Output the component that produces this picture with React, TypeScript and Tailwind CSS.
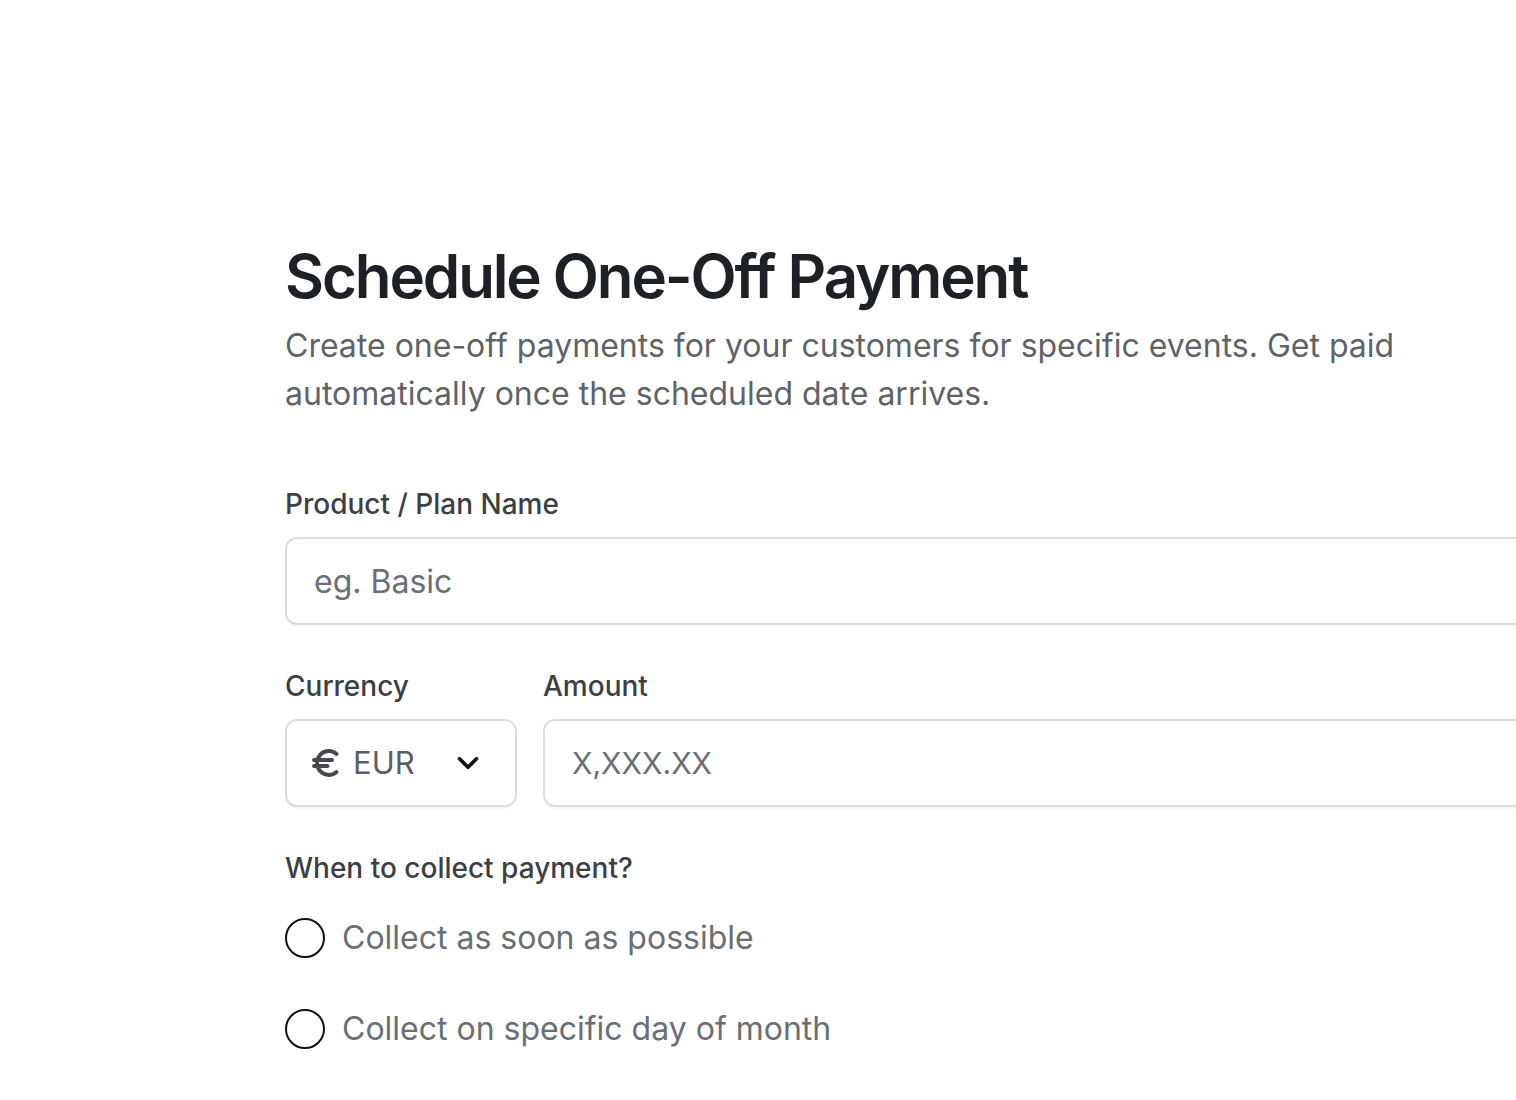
import React, { useState } from 'react';
import { Euro, ChevronDown } from 'lucide-react';

const App: React.FC = () => {
  const [name, setName] = useState('');
  const [amount, setAmount] = useState('');
  const [when, setWhen] = useState<'asap' | 'day' | null>(null);

  return (
    <div className="min-h-screen bg-white font-['Inter',sans-serif] overflow-hidden">
      <div className="pl-[285px] pt-[240px] w-[1600px]">
        <h1 className="text-[60px] leading-[72px] font-semibold tracking-[-0.035em] text-[#1d2025]">
          Schedule One-Off Payment
        </h1>
        <p className="mt-[10px] max-w-[1140px] text-[32px] leading-[48px] text-[#5f6368]">
          Create one-off payments for your customers for specific events. Get paid automatically once the scheduled date arrives.
        </p>

        <div className="mt-[66px]">
          <label className="block text-[28px] leading-[40px] font-medium text-[#3c3f44]">Product / Plan Name</label>
          <input
            value={name}
            onChange={(e) => setName(e.target.value)}
            placeholder="eg. Basic"
            className="mt-[13px] w-full h-[88px] px-[27px] rounded-[12px] border-2 border-[#dcdddf] shadow-[0_2px_2px_rgba(0,0,0,0.04)] bg-white text-[32px] text-[#3c3f44] placeholder:text-[#6b6e73] focus:outline-none"
          />
        </div>

        <div className="mt-[41px] flex gap-[26px]">
          <div className="w-[232px] shrink-0">
            <label className="block text-[28px] leading-[40px] font-medium text-[#3c3f44]">Currency</label>
            <button className="mt-[13px] w-full h-[88px] pl-[21px] pr-[30px] rounded-[12px] border-2 border-[#dcdddf] shadow-[0_2px_2px_rgba(0,0,0,0.04)] bg-white flex items-center">
              <Euro size={36} strokeWidth={2.6} color="#45484d" />
              <span className="ml-[9px] text-[31px] text-[#5b5e63]">EUR</span>
              <ChevronDown className="ml-auto" size={34} strokeWidth={2.6} color="#111" />
            </button>
          </div>
          <div className="flex-1">
            <label className="block text-[28px] leading-[40px] font-medium text-[#3c3f44]">Amount</label>
            <input
              value={amount}
              onChange={(e) => setAmount(e.target.value)}
              placeholder="X,XXX.XX"
              className="mt-[13px] w-full h-[88px] px-[27px] rounded-[12px] border-2 border-[#dcdddf] shadow-[0_2px_2px_rgba(0,0,0,0.04)] bg-white text-[30px] text-[#3c3f44] placeholder:text-[#6b6e73] focus:outline-none"
            />
          </div>
        </div>

        <p className="mt-[41px] text-[28px] leading-[40px] font-medium text-[#3c3f44]">When to collect payment?</p>

        <div className="mt-[30px] flex flex-col gap-[51px]">
          {[
            { key: 'asap' as const, text: 'Collect as soon as possible' },
            { key: 'day' as const, text: 'Collect on specific day of month' },
          ].map((o) => (
            <label key={o.key} className="flex items-center gap-[17px] cursor-pointer">
              <span
                onClick={() => setWhen(o.key)}
                className="w-[40px] h-[40px] rounded-full border-[2.5px] border-[#111] flex items-center justify-center"
              >
                {when === o.key && <span className="w-[20px] h-[20px] rounded-full bg-[#111]" />}
              </span>
              <span className="text-[32px] leading-[40px] text-[#6b6e73]">{o.text}</span>
            </label>
          ))}
        </div>
      </div>
    </div>
  );
};

export default App;
